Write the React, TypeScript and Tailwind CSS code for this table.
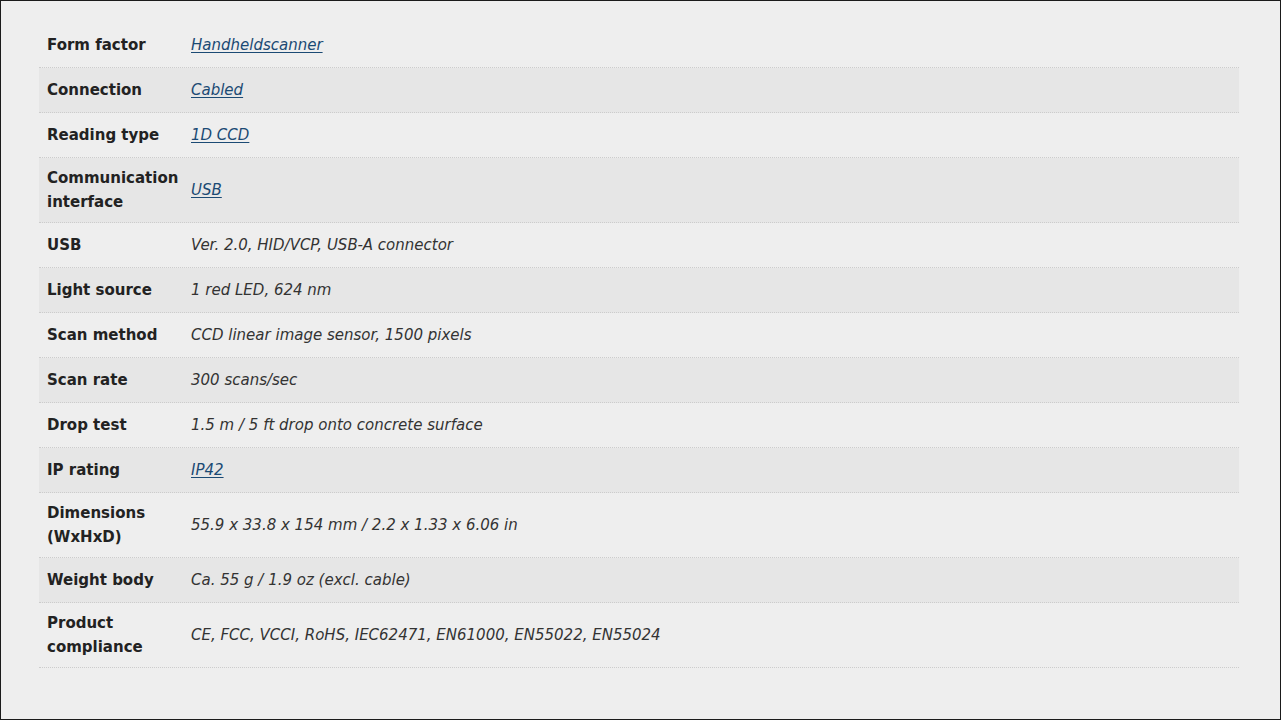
import React from 'react';

type Spec = { label: string; value: string; link?: boolean };

const specs: Spec[] = [
  { label: 'Form factor', value: 'Handheldscanner', link: true },
  { label: 'Connection', value: 'Cabled', link: true },
  { label: 'Reading type', value: '1D CCD', link: true },
  { label: 'Communication interface', value: 'USB', link: true },
  { label: 'USB', value: 'Ver. 2.0, HID/VCP, USB-A connector' },
  { label: 'Light source', value: '1 red LED, 624 nm' },
  { label: 'Scan method', value: 'CCD linear image sensor, 1500 pixels' },
  { label: 'Scan rate', value: '300 scans/sec' },
  { label: 'Drop test', value: '1.5 m / 5 ft drop onto concrete surface' },
  { label: 'IP rating', value: 'IP42', link: true },
  { label: 'Dimensions (WxHxD)', value: '55.9 x 33.8 x 154 mm / 2.2 x 1.33 x 6.06 in' },
  { label: 'Weight body', value: 'Ca. 55 g / 1.9 oz (excl. cable)' },
  { label: 'Product compliance', value: 'CE, FCC, VCCI, RoHS, IEC62471, EN61000, EN55022, EN55024' },
];

export default function App() {
  return (
    <div
      className="h-[720px] w-full border border-[#1a1a1a] bg-[#eeeeee] pl-[38px] pt-[22px] text-[15px] text-[#222]"
      style={{ fontFamily: '"DejaVu Sans", "Liberation Sans", sans-serif' }}
    >
      <div className="w-[1200px]">
        {specs.map((row, i) => (
          <div
            key={row.label}
            className={`flex items-center border-b border-dotted border-[#cccccc] ${i % 2 === 1 ? 'bg-[#e6e6e6]' : ''}`}
          >
            <div className="w-[148px] shrink-0 py-2 pl-2 pr-1 font-bold leading-6">{row.label}</div>
            <div className="flex-1 py-[10px] pl-1 italic leading-6 text-[#333]">
              {row.link ? (
                <a href="#" className="text-[#1b4a74] underline underline-offset-2">
                  {row.value}
                </a>
              ) : (
                row.value
              )}
            </div>
          </div>
        ))}
      </div>
    </div>
  );
}
